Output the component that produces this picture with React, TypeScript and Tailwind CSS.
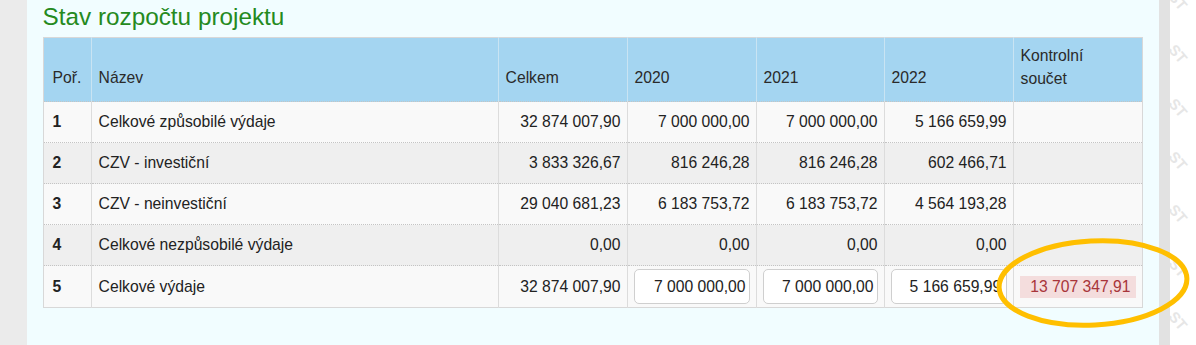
const rows = [
  { n: "1", name: "Celkové způsobilé výdaje", total: "32 874 007,90", y20: "7 000 000,00", y21: "7 000 000,00", y22: "5 166 659,99" },
  { n: "2", name: "CZV - investiční", total: "3 833 326,67", y20: "816 246,28", y21: "816 246,28", y22: "602 466,71" },
  { n: "3", name: "CZV - neinvestiční", total: "29 040 681,23", y20: "6 183 753,72", y21: "6 183 753,72", y22: "4 564 193,28" },
  { n: "4", name: "Celkové nezpůsobilé výdaje", total: "0,00", y20: "0,00", y21: "0,00", y22: "0,00" },
];

// solid column line, dotted row line
const sep = { borderLeftStyle: "solid", borderLeftColor: "#dcdcdc" } as const;
const cell = "border-l border-t border-dotted border-[#c4c4c4]";

function Box({ value, clip }: { value: string; clip?: boolean }) {
  return (
    <div
      className={
        "h-[35px] w-full flex items-center overflow-hidden whitespace-nowrap bg-white border border-[#cfcfcf] rounded-[5px] " +
        (clip ? "justify-start pl-[18px]" : "justify-end pr-[3px]")
      }
    >
      {value}
    </div>
  );
}

export default function App() {
  return (
    <div
      className="relative w-[1196px] h-[345px] flex overflow-hidden text-[15.7px] text-[#222]"
      style={{ fontFamily: '"Liberation Sans", Arial, sans-serif' }}
    >
      <div className="w-[27px] bg-[#ebebeb]" />
      <div className="flex-1 bg-[#f1fdff] pl-4 pr-4">
        <h2 className="h-[37px] pt-[2px] text-[24.3px] leading-[29px] text-[#258a1e]">Stav rozpočtu projektu</h2>
        <table className="w-[1099px] table-fixed border-collapse border border-[#d8d8d8]">
          <colgroup>
            <col className="w-[48px]" />
            <col className="w-[407px]" />
            <col className="w-[129px]" />
            <col className="w-[129px]" />
            <col className="w-[128px]" />
            <col className="w-[129px]" />
            <col className="w-[129px]" />
          </colgroup>
          <thead>
            <tr className="bg-[#a4d5f1] text-left text-[#2a2a2a]">
              <th className="h-[64px] align-bottom pl-[9px] pb-[11px] font-normal">Poř.</th>
              {["Název", "Celkem", "2020", "2021", "2022"].map((h) => (
                <th key={h} className="align-bottom px-[7px] pb-[11px] font-normal border-l border-[#c9e4f3]">
                  {h}
                </th>
              ))}
              <th className="align-bottom px-[7px] pb-[11px] font-normal leading-[23px] border-l border-[#c9e4f3]">
                Kontrolní
                <br />
                součet
              </th>
            </tr>
          </thead>
          <tbody>
            {rows.map((r, i) => (
              <tr key={r.n} className={i % 2 === 0 ? "bg-[#f9f9f9]" : "bg-[#efefef]"}>
                <td className="h-[41px] pl-[9px] font-bold border-t border-dotted border-[#c4c4c4]">{r.n}</td>
                <td className={"px-[7px] " + cell} style={sep}>{r.name}</td>
                {[r.total, r.y20, r.y21, r.y22].map((v, k) => (
                  <td key={k} className={"text-right px-[6px] " + cell} style={sep}>
                    {v}
                  </td>
                ))}
                <td className={cell} style={sep} />
              </tr>
            ))}
            <tr className="bg-[#f9f9f9]">
              <td className="h-[42px] pl-[9px] font-bold border-t border-dotted border-[#c4c4c4]">5</td>
              <td className={"px-[7px] " + cell} style={sep}>Celkové výdaje</td>
              <td className={"text-right px-[6px] " + cell} style={sep}>32 874 007,90</td>
              <td className={"px-[6px] " + cell} style={sep}><Box value="7 000 000,00" /></td>
              <td className={"px-[6px] " + cell} style={sep}><Box value="7 000 000,00" /></td>
              <td className={"px-[6px] " + cell} style={sep}><Box value="5 166 659,99" clip /></td>
              <td className={"px-[6px] " + cell} style={sep}>
                <div className="h-[22px] flex items-center justify-end pr-[5px] bg-[#f4dddd] text-[#a8353a]">13 707 347,91</div>
              </td>
            </tr>
          </tbody>
        </table>
      </div>
      <div className="w-[12px] bg-[#e2e2e2]" />
      <div className="relative w-[26px] bg-white overflow-hidden">
        {[-10, 43, 97, 150, 203, 257, 310].map((y) => (
          <span
            key={y}
            className="absolute left-[-2px] text-[15px] font-bold text-[#e6e6e6] rotate-[50deg]"
            style={{ top: y }}
          >
            ST
          </span>
        ))}
      </div>
      <svg className="absolute left-0 top-0 pointer-events-none" width="1196" height="345">
        <ellipse cx="1093" cy="283" rx="94" ry="42" fill="none" stroke="#ffbf00" strokeWidth="5" transform="rotate(-3 1093 283)" />
      </svg>
    </div>
  );
}
